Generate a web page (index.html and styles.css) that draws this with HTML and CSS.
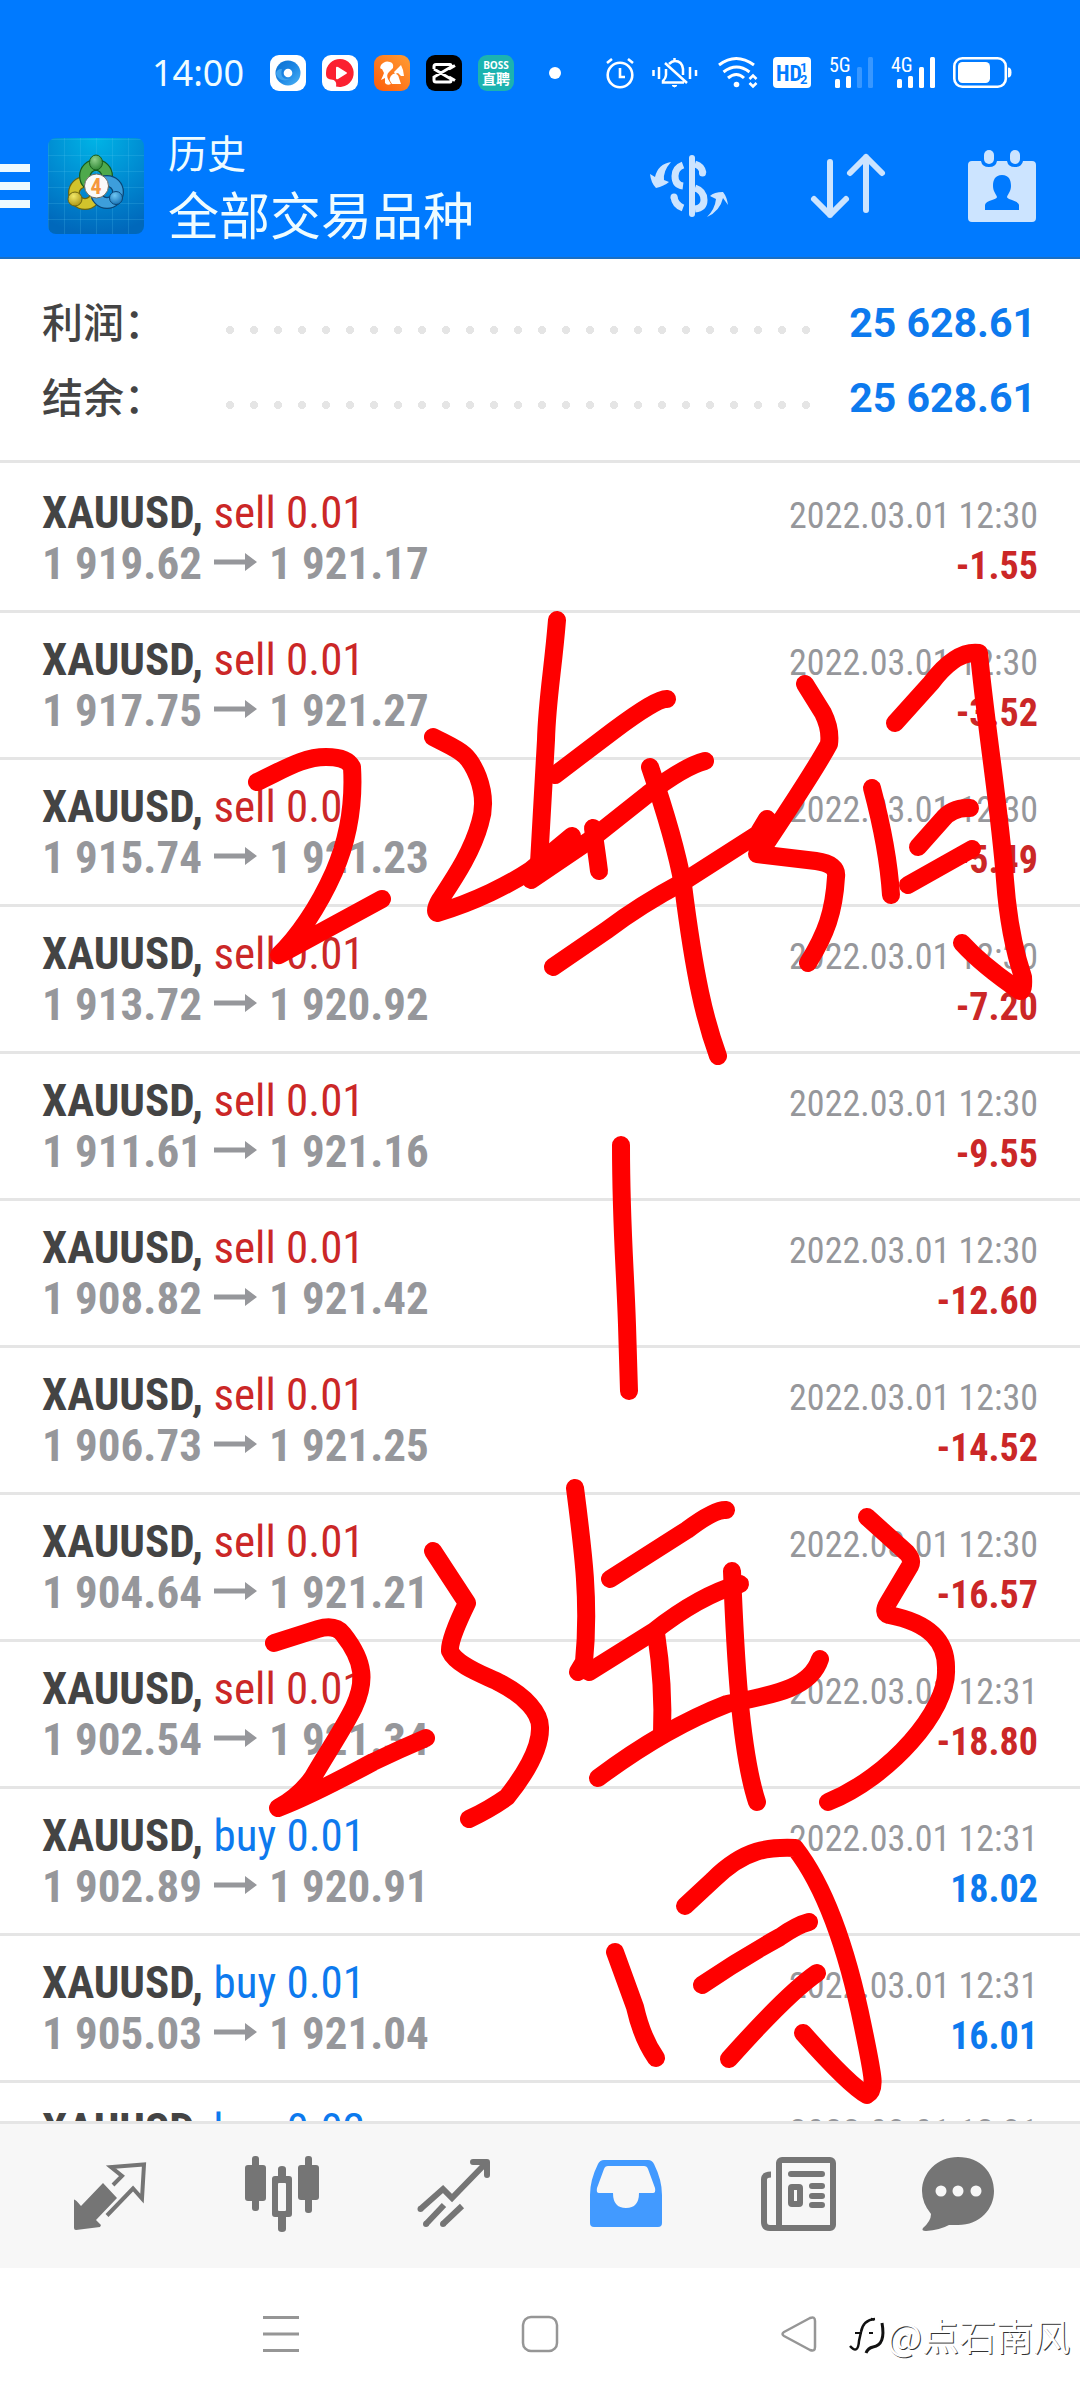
FILE: index.html
```html
<!DOCTYPE html>
<html lang="zh-CN">
<head>
<meta charset="utf-8">
<meta name="viewport" content="width=device-width, initial-scale=1">
<title>历史</title>
<link rel="stylesheet" href="styles.css">
</head>
<body>
<svg class="defs" aria-hidden="true">
  <symbol id="arrow" viewBox="0 0 43 18"><path d="M0 6.500h31V0l12 9-12 9v-6.500H0z" fill="currentColor"/></symbol>
</svg>
<div class="app">
  <header class="header">
    <div class="status">
      <span class="clock">14:00</span>
      <div class="notices">
        <svg width="36" height="36" viewBox="0 0 36 36"><defs><linearGradient id="b1" x1="0" y1="0" x2="1" y2="1"><stop offset="0" stop-color="#0a6fd0"/><stop offset=".5" stop-color="#1c86e4"/><stop offset="1" stop-color="#4db4f5"/></linearGradient></defs><rect width="36" height="36" rx="9" fill="#fff"/><circle cx="18" cy="18" r="12.500" fill="url(#b1)"/><path d="M6 19c2 6 9 8 14 5-7 1-10-3-8-10-4 0-6 2-6 5z" fill="#3fa2ee"/><circle cx="18" cy="18" r="4.300" fill="#fff"/></svg>
        <svg width="36" height="36" viewBox="0 0 36 36"><rect width="36" height="36" rx="9" fill="#fff"/><path d="M18 4a14 14 0 1 1-4 27.500c1-4-1-7-5-7C5 24 4 22 4 18A14 14 0 0 1 18 4z" fill="#fb2030"/><path d="M14 13q0-2 2-1l8 5q2 1 0 2l-8 5q-2 1-2-1z" fill="#fff"/></svg>
        <svg width="36" height="36" viewBox="0 0 36 36"><defs><linearGradient id="o1" x1="1" y1="0" x2="0" y2="1"><stop offset="0" stop-color="#ff9d33"/><stop offset="1" stop-color="#fd5c0b"/></linearGradient></defs><rect width="36" height="36" rx="9" fill="url(#o1)"/><path d="M7 10q4-5 9-3 4 1 3 6l-4 4q-3 3-1 7l3 5q-4 2-6-1v-5l-4 2q2-4 3-7l-2-4q-3 0-1-4zM20 17l7-7 2 5 1 6-3 0-3-3-3 1zM19 19q5-1 6 4l2 6H18q-5-6 1-10z" fill="#fff"/></svg>
        <svg width="36" height="36" viewBox="0 0 36 36"><rect width="36" height="36" rx="9" fill="#000"/><path d="M29 10.500l-6 3.500M29 25.500l-6-3.500M8 14v-2.500q0-2 2-2h14q1 0 1 1.500v1L8 22v3q0 2 2 2h14q1 0 1-1.500v-1.500L8 14" fill="none" stroke="#fff" stroke-width="3"/></svg>
        <svg width="36" height="36" viewBox="0 0 36 36"><rect width="36" height="36" rx="9" fill="#1cb3b0"/><text class="badge-latin" x="18" y="14" text-anchor="middle" fill="#fff">BOSS</text><text class="badge-cjk" x="18" y="29" text-anchor="middle" fill="#fff">直聘</text></svg>
      </div>
      <span class="more-dot"></span>
      <div class="signals">
        <svg width="28" height="32" viewBox="0 0 28 32" fill="none" stroke="#fff" stroke-width="2.600"><circle cx="14" cy="18" r="12.300"/><path d="M14 11v9h5M1 6l5-4M27 6l-5-4"/></svg>
        <svg width="48" height="32" viewBox="0 0 48 32" fill="none" stroke="#fff" stroke-width="2.500"><path d="M1.500 13v6M7 10v12M38 10v12M44 13v6M22.500 1v4M17 7q3-3 6-3 7 0 8 8v6M14 12v6q0 3-3 6v1.500h21M13 6l22 20"/><path d="M20 28.500q2.500 3 5 0z" fill="#fff" stroke-width="1"/></svg>
        <svg width="37" height="32" viewBox="0 0 37 32" fill="none" stroke="#fff" stroke-width="3"><path d="M1 8q17-13 35 0M5.500 15q13-10 26 0M10 21q8.500-7 16 0"/><circle cx="18.500" cy="27.500" r="2.800" fill="#fff" stroke="none"/><path d="M31.500 22l3.500-3.500 3.500 3.500M31.500 26l3.500 3.500 3.500-3.500" stroke-width="2.600"/></svg>
        <svg width="38" height="32" viewBox="0 0 38 32"><rect width="38" height="31" rx="4" fill="#fff"/><text class="sig-hd" x="3" y="24">HD</text><text class="sig-sub" x="27" y="15">1</text><text class="sig-sub" x="27" y="27">2</text></svg>
        <svg width="44" height="32" viewBox="0 0 44 32" fill="#fff"><text class="sig-net" x="0" y="15">5G</text><rect x="6" y="22" width="5" height="9" rx="1.500"/><rect x="17" y="19" width="5" height="12" rx="1.500"/><g opacity=".22"><rect x="28" y="10" width="5" height="21" rx="1.500"/><rect x="39" y="0" width="5" height="31" rx="1.500"/></g></svg>
        <svg width="44" height="32" viewBox="0 0 44 32" fill="#fff"><text class="sig-net" x="0" y="15">4G</text><rect x="6" y="22" width="5" height="9" rx="1.500"/><rect x="17" y="19" width="5" height="12" rx="1.500"/><rect x="28" y="10" width="5" height="21" rx="1.500"/><rect x="39" y="0" width="5" height="31" rx="1.500"/></svg>
        <svg width="59" height="32" viewBox="0 0 59 32"><rect x="1.300" y="1.300" width="51.500" height="28.400" rx="8" fill="none" stroke="#fff" stroke-width="2.600"/><rect x="5" y="5" width="32" height="21" rx="4.500" fill="#fff"/><path d="M55 10.500q3.500 0 3.500 5t-3.500 5z" fill="#fff"/></svg>
      </div>
    </div>
    <div class="toolbar">
      <button class="menu" type="button" aria-label="菜单"><svg width="30" height="44" viewBox="0 0 30 44" fill="#eefaff"><path d="M0 0h30v8H0zM0 18h30v8H0zM0 36h30v8H0z"/></svg></button>
      <svg class="logo" width="96" height="96" viewBox="0 0 96 96">
        <defs>
          <radialGradient id="bg" cx=".5" cy="0" r="1"><stop offset="0" stop-color="#00b4e6"/><stop offset=".6" stop-color="#0086cf"/><stop offset="1" stop-color="#0068bb"/></radialGradient>
          <pattern id="grid" width="16" height="16" patternUnits="userSpaceOnUse"><path d="M.5 0v16M0 1.500h16" stroke="#5cc8f0" stroke-opacity=".2"/></pattern>
          <radialGradient id="g" cx=".4" cy=".3" r=".8"><stop offset="0" stop-color="#8fd08a"/><stop offset="1" stop-color="#257f2b"/></radialGradient>
          <radialGradient id="y" cx=".4" cy=".3" r=".8"><stop offset="0" stop-color="#f2e868"/><stop offset="1" stop-color="#a68d0c"/></radialGradient>
          <radialGradient id="bl" cx=".4" cy=".3" r=".8"><stop offset="0" stop-color="#6fc6f2"/><stop offset="1" stop-color="#0c69af"/></radialGradient>
        </defs>
        <rect width="96" height="96" rx="8" fill="url(#bg)"/><rect width="96" height="96" rx="8" fill="url(#grid)"/>
        <g fill="none" stroke-width="12">
          <circle cx="37" cy="55" r="11" stroke="#6b6410"/><circle cx="37" cy="55" r="11" stroke="#d2c32c" stroke-width="9.500"/>
          <circle cx="48" cy="38" r="11" stroke="#175c1c"/><circle cx="48" cy="38" r="11" stroke="#4ea94c" stroke-width="9.500"/>
          <circle cx="59" cy="54" r="11" stroke="#0b4676"/><circle cx="59" cy="54" r="11" stroke="#3d9edb" stroke-width="9.500"/>
        </g>
        <ellipse cx="48" cy="24.500" rx="6.500" ry="7.500" fill="url(#g)" stroke="#175c1c"/>
        <circle cx="27" cy="61" r="7" fill="url(#y)" stroke="#6b6410"/>
        <circle cx="68" cy="60" r="6.500" fill="url(#bl)" stroke="#0b4676"/>
        <circle cx="48.500" cy="48" r="12" fill="#fafafa" stroke="#6a6a60"/>
        <text class="logo-num" x="48" y="56" text-anchor="middle">4</text>
      </svg>
      <div class="titles">
        <span class="subtitle">历史</span>
        <h1 class="title">全部交易品种</h1>
      </div>
      <div class="actions">
        <button type="button" aria-label="货币"><svg width="78" height="62" viewBox="0 0 78 62" fill="none" stroke="#cce4ff" stroke-width="6"><path d="M42 3v56" stroke-linecap="round"/><path d="M33 10q-8 3-8 11 0 9 8 10M45 9q7 2 8 9M45 33q9 3 9 12 0 8-9 9M33 53q-8-3-9-11" stroke-width="7"/><circle cx="52.500" cy="18" r="3.500" fill="#cce4ff" stroke="none"/><circle cx="24" cy="42" r="3.500" fill="#cce4ff" stroke="none"/><path d="M21 7Q8 9 5 22l-5-3q1 9 6 14 8-2 13-6l-5-2Q13 16 21 7zM57 62q13-6 16-19l5 7q-1-8-5-13-9 0-13 4l6 3q-1 10-9 18z" fill="#cce4ff" stroke="none"/></svg></button>
        <button type="button" aria-label="排序"><svg width="74" height="66" viewBox="0 0 74 66" fill="none" stroke="#cce4ff" stroke-width="6" stroke-linecap="round" stroke-linejoin="round"><path d="M19 9v53M3 46l16 16 16-16M55 57V4M39 20L55 4l16 16"/></svg></button>
        <button type="button" aria-label="日期"><svg width="68" height="72" viewBox="0 0 68 72"><path d="M4 11h9q1 6 8 6t8-6h10q1 6 8 6t8-6h9q4 0 4 4v53q0 4-4 4H4q-4 0-4-4V15q0-4 4-4z" fill="#cce4ff"/><rect x="16" y="0" width="10" height="14" rx="5" fill="#cce4ff"/><rect x="42" y="0" width="10" height="14" rx="5" fill="#cce4ff"/><path d="M34 25c7 0 9 5 9 11 0 5-3 8-4 11 0 3 11 3 12 8v5H17v-5c1-5 12-5 12-8-1-3-4-6-4-11 0-6 2-11 9-11z" fill="#007aff"/></svg></button>
      </div>
    </div>
  </header>

  <dl class="summary">
    <div class="summary-row"><dt>利润：</dt><dd class="leader"></dd><dd class="amount">25 628.61</dd></div>
    <div class="summary-row"><dt>结余：</dt><dd class="leader"></dd><dd class="amount">25 628.61</dd></div>
  </dl>

  <ul class="deals">
    <li class="deal"><p class="line"><span class="symbol">XAUUSD, <span class="sell">sell 0.01</span></span><time>2022.03.01 12:30</time></p><p class="line"><span class="price">1 919.62<svg class="to"><use href="#arrow"/></svg>1 921.17</span><b class="loss">-1.55</b></p></li>
    <li class="deal"><p class="line"><span class="symbol">XAUUSD, <span class="sell">sell 0.01</span></span><time>2022.03.01 12:30</time></p><p class="line"><span class="price">1 917.75<svg class="to"><use href="#arrow"/></svg>1 921.27</span><b class="loss">-3.52</b></p></li>
    <li class="deal"><p class="line"><span class="symbol">XAUUSD, <span class="sell">sell 0.01</span></span><time>2022.03.01 12:30</time></p><p class="line"><span class="price">1 915.74<svg class="to"><use href="#arrow"/></svg>1 921.23</span><b class="loss">-5.49</b></p></li>
    <li class="deal"><p class="line"><span class="symbol">XAUUSD, <span class="sell">sell 0.01</span></span><time>2022.03.01 12:30</time></p><p class="line"><span class="price">1 913.72<svg class="to"><use href="#arrow"/></svg>1 920.92</span><b class="loss">-7.20</b></p></li>
    <li class="deal"><p class="line"><span class="symbol">XAUUSD, <span class="sell">sell 0.01</span></span><time>2022.03.01 12:30</time></p><p class="line"><span class="price">1 911.61<svg class="to"><use href="#arrow"/></svg>1 921.16</span><b class="loss">-9.55</b></p></li>
    <li class="deal"><p class="line"><span class="symbol">XAUUSD, <span class="sell">sell 0.01</span></span><time>2022.03.01 12:30</time></p><p class="line"><span class="price">1 908.82<svg class="to"><use href="#arrow"/></svg>1 921.42</span><b class="loss">-12.60</b></p></li>
    <li class="deal"><p class="line"><span class="symbol">XAUUSD, <span class="sell">sell 0.01</span></span><time>2022.03.01 12:30</time></p><p class="line"><span class="price">1 906.73<svg class="to"><use href="#arrow"/></svg>1 921.25</span><b class="loss">-14.52</b></p></li>
    <li class="deal"><p class="line"><span class="symbol">XAUUSD, <span class="sell">sell 0.01</span></span><time>2022.03.01 12:30</time></p><p class="line"><span class="price">1 904.64<svg class="to"><use href="#arrow"/></svg>1 921.21</span><b class="loss">-16.57</b></p></li>
    <li class="deal"><p class="line"><span class="symbol">XAUUSD, <span class="sell">sell 0.01</span></span><time>2022.03.01 12:31</time></p><p class="line"><span class="price">1 902.54<svg class="to"><use href="#arrow"/></svg>1 921.34</span><b class="loss">-18.80</b></p></li>
    <li class="deal"><p class="line"><span class="symbol">XAUUSD, <span class="buy">buy 0.01</span></span><time>2022.03.01 12:31</time></p><p class="line"><span class="price">1 902.89<svg class="to"><use href="#arrow"/></svg>1 920.91</span><b class="gain">18.02</b></p></li>
    <li class="deal"><p class="line"><span class="symbol">XAUUSD, <span class="buy">buy 0.01</span></span><time>2022.03.01 12:31</time></p><p class="line"><span class="price">1 905.03<svg class="to"><use href="#arrow"/></svg>1 921.04</span><b class="gain">16.01</b></p></li>
    <li class="deal"><p class="line"><span class="symbol">XAUUSD, <span class="buy">buy 0.02</span></span><time>2022.03.01 12:31</time></p></li>
  </ul>

  <nav class="tabs">
    <button type="button" aria-label="行情"><svg width="76" height="76" viewBox="0 0 76 76"><path d="M2 44q0-2 7 6l22-23 14 15-21 22 5 5-1 2-24 3q-2 0-2-2z" fill="#757575"/><path d="M41 29l9-9-11-9 33-2.500-2 34-9-10-26 27" fill="none" stroke="#757575" stroke-width="4"/></svg></button>
    <button type="button" aria-label="图表"><svg width="76" height="76" viewBox="0 0 76 76" fill="#757575"><rect x="1" y="9" width="21" height="36" rx="3"/><rect x="8" y="0" width="7" height="55" rx="3"/><rect x="54" y="9" width="21" height="35" rx="3"/><rect x="61" y="0" width="7" height="57" rx="3"/><path d="M31 20h3v-7q0-3 4-3t4 3v7h3q3 0 3 3v35q0 3-3 3h-3v12q0 3-4 3t-4-3V61h-3q-3 0-3-3V23q0-3 3-3zm3 8v26q0 1 1 1h6q1 0 1-1V28q0-1-1-1h-6q-1 0-1 1z" fill-rule="evenodd"/></svg></button>
    <button type="button" aria-label="交易"><svg width="76" height="76" viewBox="0 0 76 76" fill="none" stroke="#757575" stroke-width="6"><path d="M4.500 53L27 33l9 9L70 7M10 68l18-19M27 68l19-18"/><path d="M57 6h14v13" stroke-linecap="round" stroke-linejoin="round"/><circle cx="4.500" cy="53" r="3" fill="#757575" stroke="none"/><circle cx="10" cy="68" r="3" fill="#757575" stroke="none"/><circle cx="27" cy="68" r="3" fill="#757575" stroke="none"/></svg></button>
    <button type="button" aria-label="历史"><svg width="76" height="76" viewBox="0 0 76 76"><path d="M16 4h44q4 0 6 4 8 16 8 31v28q0 4-4 4H6q-4 0-4-4V39Q2 24 10 8q2-4 6-4zm4 6q-3 0-4 3l-7 19q-1 5 2 5h14q0 15 13 15t13-15h14q3 0 2-5l-7-19q-1-3-4-3z" fill="#429aff" fill-rule="evenodd"/></svg></button>
    <button type="button" aria-label="新闻"><svg width="76" height="76" viewBox="0 0 76 76" fill="none" stroke="#757575" stroke-width="6"><rect x="19" y="4" width="54" height="68" rx="3"/><path d="M11 18.500q-7 0-7 5V66q0 6 6 6h12"/><path d="M31 18h31M52 30h10M52 40h10M52 49h10" stroke-linecap="round"/><rect x="31" y="31" width="9" height="17" rx="1"/></svg></button>
    <button type="button" aria-label="消息"><svg width="76" height="76" viewBox="0 0 76 76"><path d="M38 1C61 1 74 17 74 35S60 69 38 69h-9q-9 5-23 6-5 0-3-3 8-7 8-14Q2 47 2 35C2 17 17 1 38 1z" fill="#757575"/><g fill="#f7f7f7"><circle cx="21" cy="35" r="5.500"/><circle cx="38" cy="35" r="5.500"/><circle cx="56" cy="35" r="5.500"/></g></svg></button>
  </nav>

  <footer class="system">
    <button type="button" aria-label="最近任务"><svg width="38" height="38" viewBox="0 0 38 38" stroke="#969696" stroke-width="3"><path d="M1 2.500h36M1 19h36M1 35.500h36"/></svg></button>
    <button type="button" aria-label="主屏幕"><svg width="38" height="38" viewBox="0 0 38 38" fill="none" stroke="#969696" stroke-width="2.500"><rect x="2" y="2" width="34" height="34" rx="8"/></svg></button>
    <button type="button" aria-label="返回"><svg width="38" height="38" viewBox="0 0 38 38" fill="none" stroke="#969696" stroke-width="2.500" stroke-linejoin="round"><path d="M4 17L30 3q5-2 5 3v26q0 5-5 3L4 21q-3-2 0-4z"/></svg></button>
    <div class="watermark">
      <svg width="36" height="38" viewBox="0 0 36 38" fill="none" stroke="#111" stroke-width="2.500"><path d="M1 30q8 9 9-5l2-9q2-12 14-13M22 3q3 0 2 1"/><path d="M6 17h7M20 17h4" stroke-width="2"/><path d="M33 7q4 22-9 24-5 1-7 6" stroke-width="3"/></svg>
      <span>@点石南风</span>
    </div>
  </footer>

  <svg class="ink" viewBox="0 0 1080 2400" fill="none" stroke="#f00" stroke-width="18" stroke-linecap="round" stroke-linejoin="round" aria-hidden="true">
    <path d="M257 782C285 769 303 757 326 757Q347 757 352 767C354 800 350 835 334 872C318 908 297 938 279 955L382 899"/>
    <path d="M433 737C460 751 468 752 478 777Q487 801 480 823C472 852 455 877 440 900Q434 910 437 913C475 902 510 884 531 870L572 836"/>
    <path d="M557 620C553 670 547 700 546 740L539 863"/>
    <path d="M555 775L613 731Q657 698 667 699"/>
    <path d="M531 880L590 840L648 794Q685 766 705 761"/>
    <path d="M593 828Q597 855 599 871"/>
    <path d="M553 967L607 930Q640 905 683 882L758 834L767 819"/>
    <path d="M650 767Q675 840 683 885C695 980 705 1020 718 1056"/>
    <path d="M805 684L823 713Q831 729 829 744C815 770 785 815 765 845Q757 850 757 854L816 861Q838 864 836 877C834 912 826 934 808 963"/>
    <path d="M872 788Q888 848 891 895"/>
    <path d="M918 847L942 820Q952 807 970 808M908 885L972 849"/>
    <path d="M895 723L931 683Q956 650 979 653C985 720 1000 810 1005 880Q1009 935 1023 977Q1024 991 1020 991Q983 966 962 943"/>
    <path d="M621 1145C621 1225 625 1265 627 1325L629 1391"/>
    <path d="M274 1643L318 1629Q335 1624 343 1634C366 1663 365 1683 354 1707C345 1726 330 1748 313 1777Q300 1796 278 1808Q310 1796 373 1762Q400 1749 426 1738"/>
    <path d="M433 1551L467 1603Q449 1640 450 1651C457 1667 490 1677 500 1683C525 1696 541 1713 540 1729C540 1750 523 1777 507 1797Q490 1809 469 1819"/>
    <path d="M575 1488C583 1550 590 1602 584 1662L578 1672"/>
    <path d="M589 1672L653 1632Q700 1595 740 1584"/>
    <path d="M610 1579L687 1530Q715 1509 726 1510"/>
    <path d="M732 1571C735 1650 740 1750 757 1802"/>
    <path d="M656 1633Q664 1685 662 1735"/>
    <path d="M598 1778Q665 1728 727 1704C770 1695 810 1690 820 1659"/>
    <path d="M867 1517L907 1553Q913 1560 910 1566L888 1603Q882 1613 889 1615C930 1623 947 1642 946 1670C948 1710 890 1777 828 1802"/>
    <path d="M685 1906L713 1880C745 1848 770 1847 795 1848C830 1893 850 1963 863 2027C874 2080 876 2090 867 2095Q850 2086 803 2033"/>
    <path d="M615 1952L635 2007Q642 2038 656 2058"/>
    <path d="M702 1985Q740 1959 780 1937Q797 1925 809 1922"/>
    <path d="M729 2059Q788 1993 817 1973"/>
  </svg>
</div>
</body>
</html>
```
FILE: styles.css
```css
* { box-sizing: border-box; }

body {
  margin: 0;
  background: #fff;
  color: #444;
  font-family: "Roboto", "Noto Sans CJK SC", sans-serif;
}

button {
  display: flex;
  align-items: center;
  justify-content: center;
  padding: 0;
  border: 0;
  background: none;
}

svg { display: block; flex: none; overflow: visible; }

.defs { position: absolute; width: 0; height: 0; }

.app {
  position: relative;
  display: flex;
  flex-direction: column;
  height: 100vh;
  overflow: hidden;
}

/* Header */
.header {
  flex: none;
  background: #007aff;
  border-bottom: 2px solid #1a6fc4;
  color: #effcff;
}

.status {
  display: flex;
  align-items: center;
  height: 115px;
  padding: 30px 68px 0 152px;
}

.clock {
  width: 118px;
  font: 36px/40px "Noto Sans", sans-serif;
}

.notices { display: flex; gap: 16px; }

.more-dot {
  width: 12px;
  height: 12px;
  margin-left: 35px;
  border-radius: 50%;
  background: #fff;
}

.signals { display: flex; gap: 18px; margin-left: auto; }

.badge-latin { font: 700 10px "Open Sans", sans-serif; }
.badge-cjk { font: 700 14px "Noto Sans CJK SC", sans-serif; }
.sig-hd { font: 700 22px "Roboto Condensed", "Liberation Sans Narrow", sans-serif; fill: #007aff; }
.sig-sub { font: 700 13px "Roboto", sans-serif; fill: #007aff; }
.sig-net { font: 400 20px "Roboto Condensed", "Liberation Sans Narrow", sans-serif; }
.logo-num { font: 700 22px "Roboto Condensed", "Roboto", sans-serif; fill: #f5973c; }

.toolbar {
  display: flex;
  align-items: center;
  height: 142px;
  padding-right: 44px;
}

.menu { margin-right: 18px; }

.titles {
  display: flex;
  flex-direction: column;
  gap: 2px;
  margin-left: 24px;
  padding-bottom: 8px;
  font-family: "Noto Sans CJK SC", sans-serif;
}

.subtitle { font-size: 39px; line-height: 60px; }
.title { margin: 0; font-size: 51px; font-weight: 400; line-height: 60px; }

.actions { display: flex; align-items: center; gap: 83px; margin-left: auto; }

/* Balance summary */
.summary {
  flex: none;
  display: flex;
  flex-direction: column;
  gap: 15px;
  margin: 0;
  padding: 34px 44px 32px 42px;
  border-bottom: 3px solid #e5e5e5;
}

.summary-row {
  display: grid;
  grid-template-columns: 176px 1fr 218px;
  align-items: center;
  line-height: 60px;
}

.summary-row dt { align-self: start; font: 500 41px/54px "Noto Sans CJK SC", sans-serif; }
.summary-row dd { margin: 0; }

.summary-row .leader {
  height: 8px;
  margin-top: 14px;
  background: radial-gradient(circle at center, #e5e5e5 4px, transparent 4px) 0 0 / 24px 8px repeat-x;
}

.amount {
  color: #0d7aee;
  font-size: 41px;
  font-weight: 700;
  text-align: right;
}

/* Deal list */
.deals {
  flex: 1;
  min-height: 0;
  margin: 0;
  padding: 3px 0 0;
  overflow: hidden;
  list-style: none;
  font-family: "Roboto Condensed", "Liberation Sans Narrow", sans-serif;
}

.deal {
  height: 147px;
  padding: 21px 42px 0;
  border-bottom: 3px solid #e5e5e5;
}

.line {
  display: flex;
  align-items: baseline;
  justify-content: space-between;
  height: 51px;
  margin: 0;
  font-size: 38px;
  line-height: 51px;
}

.symbol, .price { font-size: 45px; font-weight: 700; }
.price { color: #96979b; }
.sell, .buy { font-weight: 400; }
.sell, .loss { color: #cb2727; }
.buy, .gain { color: #0d7aee; }
.line time { color: #96979b; font-size: 36px; }

.to {
  display: inline-block;
  width: 43px;
  height: 18px;
  margin: 0 12px;
  vertical-align: 8px;
}

/* Tab bar */
.tabs {
  flex: none;
  display: grid;
  grid-template-columns: repeat(5, 43fr) 37fr;
  height: 147px;
  padding: 0 48px 4px 24px;
  border-top: 3px solid #e5e5e5;
  background: #f7f7f7;
}

/* System navigation */
.system {
  position: relative;
  flex: none;
  display: grid;
  grid-template-columns: repeat(3, 1fr);
  height: 132px;
  padding: 0 14%;
}

.watermark {
  position: absolute;
  right: 10px;
  bottom: 37px;
  display: flex;
  align-items: center;
  gap: 2px;
  color: #fff;
  font: 37px/56px "Noto Sans CJK SC", sans-serif;
  text-shadow: 1px 1px 0 #333;
}

/* Handwritten notes over the screen */
.ink {
  position: absolute;
  top: 0;
  left: 0;
  width: 100%;
  height: auto;
  pointer-events: none;
}
```
